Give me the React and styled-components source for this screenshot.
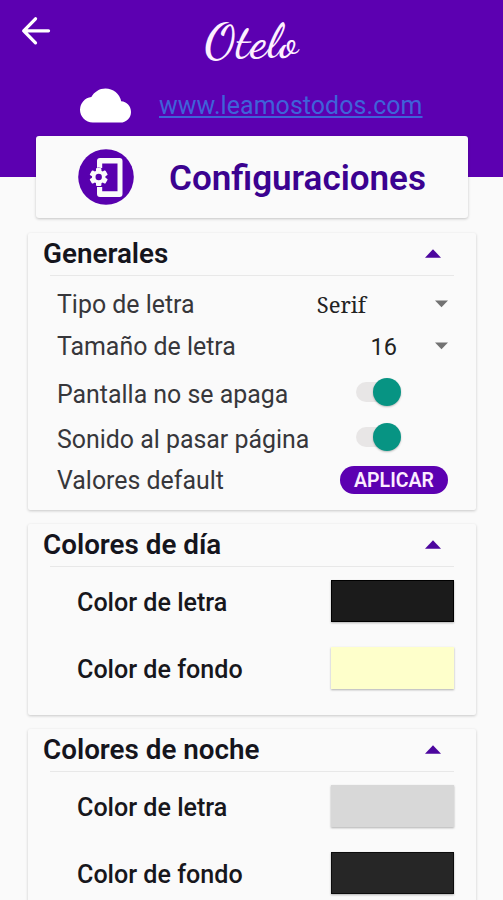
import React from 'react';
import styled, { createGlobalStyle } from 'styled-components';
import { MdCloud } from 'react-icons/md';

const Global = createGlobalStyle`
  * { box-sizing: border-box; }
  html, body { margin: 0; background: #fafafa; }
  body { font-family: Roboto, sans-serif; overflow: hidden; }
  h1, h2 { margin: 0; }
`;

const Screen = styled.main`
  height: 900px;
  overflow: hidden;
  background: #fafafa;
`;

const Header = styled.header`
  height: 177px;
  background: #5c00b1;
`;

const TopBar = styled.div`
  display: grid;
  grid-template-columns: 70px 1fr 70px;
  height: 84px;
`;

const BackButton = styled.button`
  display: flex;
  width: 70px;
  height: 62px;
  padding: 16px 0 0 21px;
  border: 0;
  background: none;
`;

const Brand = styled.h1`
  text-align: center;
  color: #fdf0ff;
  font: 600 48px/84px 'Dancing Script', 'Liberation Serif', serif;
  letter-spacing: 0.8px;
`;

const SiteRow = styled.div`
  display: flex;
  align-items: center;
  height: 42px;
  padding-left: 79px;
`;

const CloudIcon = styled(MdCloud)`
  width: 53px;
  height: 51px;
  color: #fff;
  flex: none;
`;

const SiteLink = styled.a`
  margin-left: 27px;
  padding-top: 1px;
  color: #3f62d9;
  font-size: 24.9px;
  line-height: 42px;
  letter-spacing: 0.1px;
  text-decoration: underline;
  text-decoration-thickness: 2px;
  text-underline-offset: 2px;
  text-decoration-skip-ink: none;
`;

const TitleCard = styled.section`
  position: relative;
  display: flex;
  align-items: center;
  width: 432px;
  height: 82px;
  margin: -41px 0 0 36px;
  padding-left: 42px;
  border-radius: 3px;
  background: #fafafa;
  box-shadow: 0 1px 3px rgba(0, 0, 0, 0.22);
`;

const Title = styled.h2`
  margin: 4px 0 0 35px;
  color: #3b0290;
  font-size: 35px;
  font-weight: 600;
  line-height: 44px;
`;

const Card = styled.section`
  width: 448px;
  height: ${(p) => p.$height}px;
  margin: ${(p) => p.$gap}px 0 0 28px;
  border-radius: 2px;
  background: #fafafa;
  box-shadow: 0 1px 3px rgba(0, 0, 0, 0.2);
`;

const CardHeader = styled.div`
  display: flex;
  align-items: center;
  justify-content: space-between;
  height: 42px;
  padding: 0 35px 2px 15px;
`;

const Heading = styled.h2`
  padding-top: 2px;
  color: #15151d;
  font-size: 27.8px;
  font-weight: 600;
  line-height: 38px;
`;

const Divider = styled.div`
  height: 1px;
  margin: 0 22px 0 22px;
  background: #e8e8e8;
`;

const Settings = styled.div`
  padding-top: 7px;
`;

const SettingRow = styled.div`
  display: flex;
  align-items: center;
  justify-content: space-between;
  height: ${(p) => p.$height}px;
  padding: 0 28px 0 29px;
`;

const Label = styled.span`
  padding-top: 2px;
  color: #37373b;
  font-size: 24.9px;
  line-height: 32px;
  white-space: nowrap;
`;

const Select = styled.div`
  display: flex;
  align-items: center;
  gap: ${(p) => p.$gap}px;
`;

const Value = styled.span`
  color: #222;
  font-family: ${(p) => (p.$serif ? "'Noto Serif', 'DejaVu Serif Condensed', 'DejaVu Serif', serif" : 'Roboto, sans-serif')};
  font-stretch: ${(p) => (p.$serif ? 'condensed' : 'normal')};
  font-size: ${(p) => (p.$serif ? 22 : 23.5)}px;
  line-height: 32px;
  padding-top: ${(p) => (p.$serif ? 0 : 2)}px;
`;

const Switch = styled.div`
  display: flex;
  align-items: center;
  justify-content: flex-end;
  width: 43px;
  height: 20px;
  margin: 0 49px 3px 0;
  border-radius: 10px;
  background: #e8e6e6;
`;

const Thumb = styled.span`
  flex: none;
  width: 28px;
  height: 28px;
  margin-right: -2px;
  border-radius: 50%;
  background: #079483;
  box-shadow: 0 1px 2px rgba(0, 0, 0, 0.25);
`;

const ApplyButton = styled.button`
  width: 108px;
  height: 28px;
  padding: 1px 0 0;
  border: 0;
  border-radius: 14px;
  background: #5c00b1;
  color: #fcecff;
  font: 600 19.5px/27px Roboto, sans-serif;
`;

const Swatches = styled.div`
  display: flex;
  flex-direction: column;
  gap: 25px;
  padding-top: 13px;
`;

const ColorRow = styled.div`
  display: flex;
  align-items: center;
  justify-content: space-between;
  height: 42px;
  padding: 0 22px 0 49px;
`;

const ColorLabel = styled(Label)`
  padding-top: 4px;
  color: #17171c;
  font-size: 25.1px;
  font-weight: 500;
`;

const Swatch = styled.span`
  width: 123px;
  height: 42px;
  background: ${(p) => p.$color};
  border: ${(p) => (p.$edge ? `1px solid ${p.$edge}` : '0')};
  box-shadow: 0 1px 2px rgba(0, 0, 0, 0.3);
`;

const Arrow = () => (
  <svg width="31" height="30" viewBox="0 0 31 30" fill="none" stroke="#fff" strokeWidth="3.3" strokeLinecap="round" strokeLinejoin="round">
    <path d="M27.5 14.8H2.7M14.5 2.8L2.7 14.8l11.8 12" />
  </svg>
);

const DeviceIcon = () => (
  <svg width="56" height="56" viewBox="0 0 56 56">
    <circle cx="28" cy="28" r="27.8" fill="#5800ae" />
    <path fill="#fafafa" fillRule="evenodd" d="M22 9h19.5q3 0 3 3v33q0 3-3 3H22q-3 0-3-3v-7h5.2v4.2h15.3V14.5H24.2V19H19v-7q0-3 3-3z" />
    <circle cx="20.7" cy="28" r="9.5" fill="#5800ae" />
    <g fill="#fafafa">
      {[0, 60, 120].map((a) => (
        <rect key={a} x="18" y="18.9" width="5.4" height="18.2" rx="1" transform={`rotate(${a} 20.7 28)`} />
      ))}
      <circle cx="20.7" cy="28" r="6.8" />
    </g>
    <circle cx="20.7" cy="28" r="3.2" fill="#5800ae" />
  </svg>
);

const Collapse = () => (
  <svg width="16" height="9" viewBox="0 0 16 9">
    <path d="M0 8.7L8 .3l8 8.4z" fill="#4c069e" />
  </svg>
);

const Caret = () => (
  <svg width="13" height="8" viewBox="0 0 13 8">
    <path d="M0 .5h13L6.5 7.3z" fill="#727272" />
  </svg>
);

const Toggle = () => (
  <Switch role="switch" aria-checked="true">
    <Thumb />
  </Switch>
);

function ColorCard({ title, height, gap, colors }) {
  return (
    <Card $height={height} $gap={gap}>
      <CardHeader>
        <Heading>{title}</Heading>
        <Collapse />
      </CardHeader>
      <Divider />
      <Swatches>
        {colors.map((c) => (
          <ColorRow key={c.label}>
            <ColorLabel>{c.label}</ColorLabel>
            <Swatch $color={c.color} $edge={c.edge} />
          </ColorRow>
        ))}
      </Swatches>
    </Card>
  );
}

export default function App() {
  return (
    <Screen>
      <Global />
      <Header>
        <TopBar>
          <BackButton aria-label="Volver"><Arrow /></BackButton>
          <Brand>Otelo</Brand>
        </TopBar>
        <SiteRow>
          <CloudIcon />
          <SiteLink>www.leamostodos.com</SiteLink>
        </SiteRow>
      </Header>
      <TitleCard>
        <DeviceIcon />
        <Title>Configuraciones</Title>
      </TitleCard>
      <Card $height={277} $gap={15}>
        <CardHeader>
          <Heading>Generales</Heading>
          <Collapse />
        </CardHeader>
        <Divider />
        <Settings>
          <SettingRow $height={42}>
            <Label>Tipo de letra</Label>
            <Select $gap={69}><Value $serif>Serif</Value><Caret /></Select>
          </SettingRow>
          <SettingRow $height={42}>
            <Label>Tamaño de letra</Label>
            <Select $gap={38}><Value>16</Value><Caret /></Select>
          </SettingRow>
          <SettingRow $height={53}>
            <Label>Pantalla no se apaga</Label>
            <Toggle />
          </SettingRow>
          <SettingRow $height={37}>
            <Label>Sonido al pasar página</Label>
            <Toggle />
          </SettingRow>
          <SettingRow $height={46}>
            <Label>Valores default</Label>
            <ApplyButton>APLICAR</ApplyButton>
          </SettingRow>
        </Settings>
      </Card>
      <ColorCard
        title="Colores de día"
        height={191}
        gap={14}
        colors={[
          { label: 'Color de letra', color: '#1b1b1b', edge: '#000' },
          { label: 'Color de fondo', color: '#feffcb' },
        ]}
      />
      <ColorCard
        title="Colores de noche"
        height={190}
        gap={14}
        colors={[
          { label: 'Color de letra', color: '#d8d8d8' },
          { label: 'Color de fondo', color: '#262626', edge: '#0c0c0c' },
        ]}
      />
    </Screen>
  );
}
